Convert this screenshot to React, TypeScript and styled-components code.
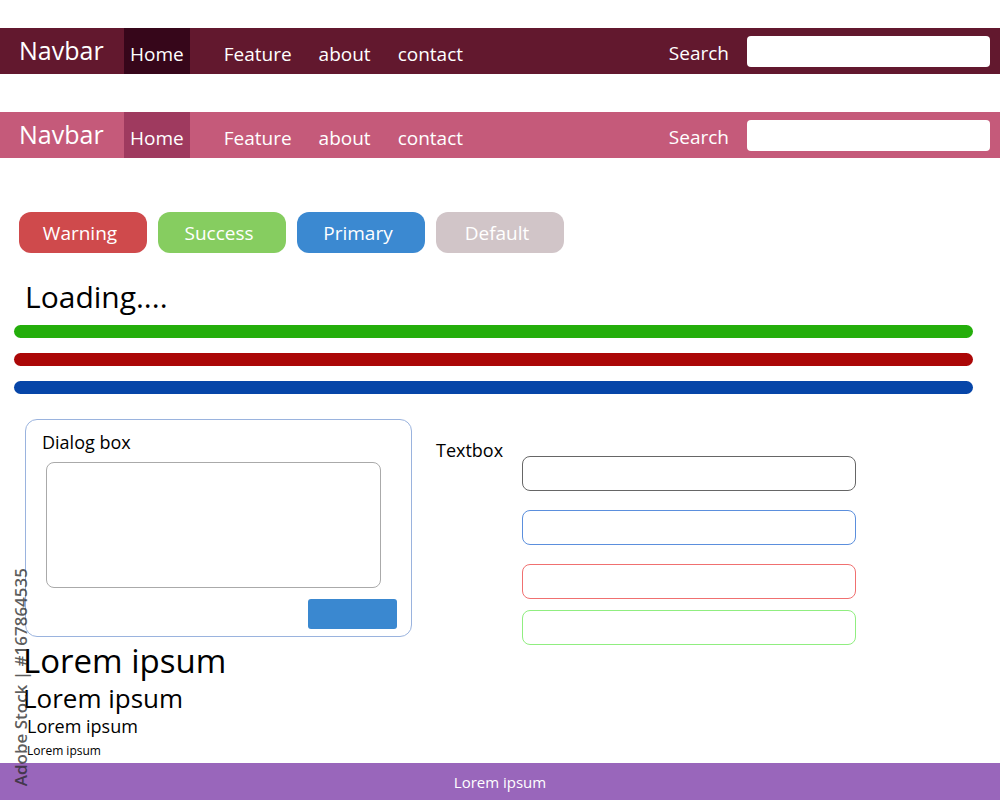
import React from "react";
import styled, {createGlobalStyle} from "styled-components";

const GlobalStyle = createGlobalStyle`
    html, body {
        margin: 0;
        padding: 0;
        background: #ffffff;
        font-family: "Open Sans", "Noto Sans", sans-serif;
    }
`

const Page = styled.div`
    position: relative;
    width: 1000px;
    height: 800px;
    display: flex;
    flex-direction: column;
    overflow: hidden;
`

const Bar = styled.nav<{ $bg: string; $top: number }>`
    display: flex;
    align-items: stretch;
    height: 46px;
    flex-shrink: 0;
    margin-top: ${p => p.$top}px;
    background: ${p => p.$bg};
    color: #ffffff;
`

const Brand = styled.div`
    width: 105px;
    padding-left: 19px;
    font-size: 25px;
    line-height: 46px;
    margin-top: -1px;
`

const NavLinks = styled.div`
    display: flex;
    align-items: stretch;
    gap: 17px;
    flex: 1;
`

const NavLink = styled.a<{ $active?: string }>`
    display: flex;
    align-items: center;
    padding: 5px ${p => (p.$active ? 6 : 5)}px 0;
    font-size: 19px;
    color: #ffffff;
    background: ${p => p.$active || "transparent"};
    margin-right: ${p => (p.$active ? 12 : 0)}px;
`

const SearchBox = styled.div`
    display: flex;
    align-items: center;
    gap: 18px;
    padding-right: 10px;
`

const SearchLabel = styled.span`
    font-size: 19px;
    padding-top: 4px;
`

const SearchInput = styled.div`
    width: 243px;
    height: 31px;
    background: #ffffff;
    border-radius: 4px;
`

const ButtonRow = styled.div`
    display: flex;
    gap: 11px;
    margin-top: 54px;
    padding-left: 19px;
`

const Pill = styled.button<{ $bg: string }>`
    width: 128px;
    height: 41px;
    border: none;
    border-radius: 12px;
    background: ${p => p.$bg};
    color: #ffffff;
    font-family: inherit;
    font-size: 19px;
    padding: 0 6px 0 0;
`

const Loading = styled.div`
    margin-top: 26px;
    padding-left: 25px;
    font-size: 30px;
    line-height: 36px;
    color: #000000;
`

const Bars = styled.div`
    display: flex;
    flex-direction: column;
    gap: 15px;
    margin: 10px 27px 0 14px;
`

const Progress = styled.div<{ $bg: string }>`
    height: 13px;
    border-radius: 7px;
    background: ${p => p.$bg};
`

const Section = styled.div`
    display: flex;
    gap: 24px;
    margin-top: 25px;
    padding-left: 25px;
`

const Dialog = styled.div`
    width: 385px;
    height: 216px;
    border: 1px solid #9ab3de;
    border-radius: 12px;
    box-sizing: content-box;
    display: flex;
    flex-direction: column;
`

const DialogTitle = styled.div`
    padding: 10px 0 0 16px;
    font-size: 18px;
    line-height: 24px;
`

const DialogArea = styled.div`
    margin: 8px 0 0 20px;
    width: 333px;
    height: 124px;
    border: 1px solid #aaaaaa;
    border-radius: 8px;
`

const DialogButton = styled.div`
    align-self: flex-end;
    width: 89px;
    height: 30px;
    margin: 11px 14px 0 0;
    background: #3a88d0;
    border-radius: 3px;
`

const Textboxes = styled.div`
    display: flex;
    gap: 18px;
`

const TextboxLabel = styled.div`
    width: 68px;
    margin-top: 19px;
    font-size: 18px;
    line-height: 24px;
`

const Fields = styled.div`
    display: flex;
    flex-direction: column;
    gap: 19px;
    margin-top: 37px;
`

const Field = styled.div<{ $color: string; $tight?: boolean }>`
    width: 332px;
    height: 33px;
    border: 1px solid ${p => p.$color};
    border-radius: 8px;
    margin-top: ${p => (p.$tight ? -8 : 0)}px;
`

const Headings = styled.div`
    display: flex;
    flex-direction: column;
    padding-left: 23px;
    margin-top: -2px;
`

const Lorem = styled.div<{ $size: number; $line: number; $gap: number; $indent: number }>`
    font-size: ${p => p.$size}px;
    line-height: ${p => p.$line}px;
    margin-top: ${p => p.$gap}px;
    margin-left: ${p => p.$indent}px;
    color: #000000;
`

const Footer = styled.footer`
    margin-top: auto;
    height: 37px;
    flex-shrink: 0;
    background: #9966bb;
    color: #ffffff;
    font-size: 15px;
    display: flex;
    align-items: center;
    justify-content: center;
`

const Watermark = styled.div`
    position: absolute;
    left: 11px;
    bottom: 14px;
    writing-mode: vertical-rl;
    transform: rotate(180deg);
    font-size: 17px;
    font-weight: 600;
    color: rgba(40, 40, 40, 0.75);
    white-space: nowrap;
    line-height: 20px;
`

const navs = ["Feature", "about", "contact"];

function Navbar({bg, active, top}: { bg: string; active: string; top: number }) {
    return (
        <Bar $bg={bg} $top={top}>
            <Brand>Navbar</Brand>
            <NavLinks>
                <NavLink $active={active}>Home</NavLink>
                {navs.map(n => <NavLink key={n}>{n}</NavLink>)}
            </NavLinks>
            <SearchBox>
                <SearchLabel>Search</SearchLabel>
                <SearchInput/>
            </SearchBox>
        </Bar>
    )
}

export default function App() {
    return (
        <Page>
            <GlobalStyle/>
            <Navbar bg="#62182e" active="#36061a" top={28}/>
            <Navbar bg="#c55a7a" active="#9f3a5f" top={38}/>
            <ButtonRow>
                <Pill $bg="#cf4a4c">Warning</Pill>
                <Pill $bg="#86cd60">Success</Pill>
                <Pill $bg="#3b89d1">Primary</Pill>
                <Pill $bg="#d1c5c8">Default</Pill>
            </ButtonRow>
            <Loading>Loading....</Loading>
            <Bars>
                <Progress $bg="#24ae0b"/>
                <Progress $bg="#ab0707"/>
                <Progress $bg="#0645a8"/>
            </Bars>
            <Section>
                <Dialog>
                    <DialogTitle>Dialog box</DialogTitle>
                    <DialogArea/>
                    <DialogButton/>
                </Dialog>
                <Textboxes>
                    <TextboxLabel>Textbox</TextboxLabel>
                    <Fields>
                        <Field $color="#666666"/>
                        <Field $color="#5b8fdd"/>
                        <Field $color="#f07070"/>
                        <Field $color="#90ee80" $tight/>
                    </Fields>
                </Textboxes>
            </Section>
            <Headings>
                <Lorem $size={33} $line={36} $gap={0} $indent={0}>Lorem ipsum</Lorem>
                <Lorem $size={26} $line={30} $gap={4} $indent={0}>Lorem ipsum</Lorem>
                <Lorem $size={18} $line={22} $gap={2} $indent={4}>Lorem ipsum</Lorem>
                <Lorem $size={12} $line={16} $gap={6} $indent={4}>Lorem ipsum</Lorem>
            </Headings>
            <Footer>Lorem ipsum</Footer>
            <Watermark>Adobe Stock | #167864535</Watermark>
        </Page>
    )
}
